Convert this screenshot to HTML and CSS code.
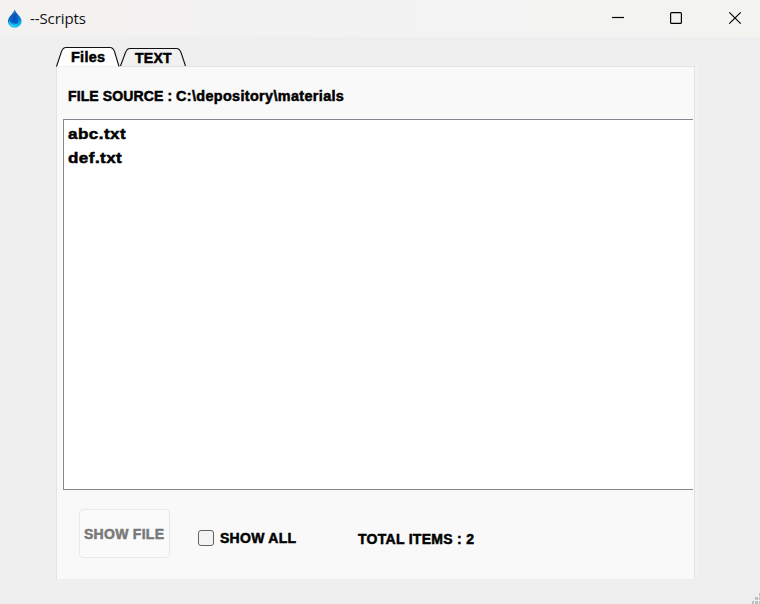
FILE: index.html
```
<!DOCTYPE html>
<html lang="en">
<head>
<meta charset="utf-8">
<title>--Scripts</title>
<link rel="stylesheet" href="styles.css">
</head>
<body>
<div class="window">
  <header class="titlebar">
    <svg class="drop" width="16" height="20" viewBox="0 0 16 20">
      <defs>
        <linearGradient id="water" x1="0.2" y1="0" x2="0.5" y2="1">
          <stop offset="0" stop-color="#5a91b8"/>
          <stop offset=".35" stop-color="#0c59b4"/>
          <stop offset=".6" stop-color="#0874d8"/>
          <stop offset="1" stop-color="#12c8f5"/>
        </linearGradient>
      </defs>
      <path d="M7.700 .3C6.800 4.300 1 8 1 12.200a6.800 6.500 0 0 0 13.600 0C14.600 8 8.600 4.300 7.700 .3z" fill="url(#water)"/>
      <path d="M8 5C8.500 9 12.500 10 11 14 9.500 15.500 6 14.500 4.500 12.500 4.500 10 7.500 8 8 5z" fill="#0546b0" opacity=".65"/>
      <path d="M2.300 11.500c1 4 4 4.800 8 5-5 2.500-9-.5-8-5z" fill="#22e0fa"/>
    </svg>
    <span class="title">--Scripts</span>
    <svg class="controls" width="132" height="16" viewBox="0 0 132 16">
      <path d="M2 7.500h12" class="ctl"/>
      <rect x="60.600" y="2.600" width="10.800" height="10.800" rx="1" class="ctl"/>
      <path d="M119.300 2.300l11.400 11.400M130.700 2.300l-11.400 11.400" class="ctl"/>
    </svg>
  </header>
  <main class="content">
    <nav class="tabs">
      <div class="tab active">
        <svg width="65" height="20" viewBox="0 0 65 20"><path d="M.5 19.500L5.500 4.500Q7 .5 10 .5H54Q57 .5 58.500 4.500L63 19.500"/></svg>
        <span class="t-files">Files</span>
      </div>
      <div class="tab">
        <svg width="66" height="20" viewBox="0 0 66 20"><path d="M-.5 19L4.500 5.500Q6 1.500 9 1.500H55.500Q58.500 1.500 60 5.500L64.500 19"/></svg>
        <span class="t-text">TEXT</span>
      </div>
    </nav>
    <section class="panel">
      <div class="source"><span class="t-source">FILE SOURCE : </span><span class="t-path">C:\depository\materials</span></div>
      <div class="list">
        <div class="item"><span class="t-item">abc.txt</span></div>
        <div class="item"><span class="t-item">def.txt</span></div>
      </div>
      <div class="footer">
        <button class="show-file" disabled><span class="t-show">SHOW FILE</span></button>
        <label class="show-all"><input type="checkbox"><span class="t-all">SHOW ALL</span></label>
        <div class="total"><span class="t-total">TOTAL ITEMS : 2</span></div>
      </div>
    </section>
  </main>
  <svg class="grip" width="8" height="11" viewBox="0 0 8 11">
    <path d="M7 0h1v3H7zM3 4h3v3H3zM7 4h1v3H7zM0 8h2v3H0zM3 8h3v3H3zM7 8h1v3H7z"/>
  </svg>
</div>
</body>
</html>
```
FILE: styles.css
```
* { box-sizing: border-box; }
body { margin: 0; background: #efefef; overflow: hidden; }
.window {
  position: relative;
  width: 760px;
  height: 604px;
  font: bold 14px/16px "Liberation Sans", Arial, sans-serif;
  color: #000;
}
.titlebar {
  display: flex;
  align-items: center;
  height: 37px;
  padding: 0 18px 0 7px;
  background: linear-gradient(90deg, #f4f2f1, #f3f3f3 60%, #f3f3f0);
}
.drop { margin-right: 7px; flex: none; }
.title {
  font: 15px/20px "Open Sans", "Noto Sans", sans-serif;
  letter-spacing: -0.1px;
  color: #111;
  position: relative;
  top: -1px;
}
.controls { margin-left: auto; margin-bottom: 1px; }
.ctl { fill: none; stroke: #000; stroke-width: 1.2; }
.content { padding: 10px 63px 0 56px; }
.tabs { display: flex; height: 20px; margin-bottom: -1px; }
.tab {
  position: relative;
  z-index: 1;
  height: 20px;
}
.tab svg { display: block; overflow: visible; }
.tab path { fill: #f1f1f1; stroke: #111; stroke-width: 1.1; }
.tab.active path { fill: #fff; }
.panel {
  width: 639px;
  height: 513px;
  border: 1px solid #e3e3e3;
  border-bottom: 0;
  background: #f9f9f9;
  box-shadow: 3px 0 #f2f2f2;
}
.source { display: flex; height: 52px; padding: 21px 0 0 11px; }
.list {
  height: 371px;
  margin: 0 1px 0 6px;
  padding: 2px 4px;
  border: 1px solid #828790;
  border-right: 0;
  background: #fff;
}
.item { height: 24px; font-size: 15.5px; line-height: 24px; }
.footer { display: flex; padding: 19px 0 0 22px; }
.show-file {
  width: 91px;
  height: 49px;
  padding: 0 0 0 4px;
  border: 1px solid #e8e8e8;
  border-radius: 4px;
  background: #fafafa;
  color: #787878;
  font: inherit;
  text-align: left;
  white-space: nowrap;
}
.show-all { display: flex; align-items: center; height: 16px; margin: 21px 0 0 28px; }
.show-all input {
  appearance: none;
  width: 16px;
  height: 16px;
  margin: 0 6px 0 0;
  border: 1px solid #626262;
  border-radius: 3px;
  background: #f3f3f3;
}
.total { margin: 22px 0 0 62px; }
.panel span, .tab span {
  display: inline-block;
  white-space: nowrap;
  transform-origin: 0 50%;
  letter-spacing: 0.28px;
  -webkit-text-stroke: 0.5px currentColor;
}
.tab .t-files { position: absolute; top: 2px; left: 15px; transform: scaleX(1.03); }
.tab .t-text { position: absolute; top: 3px; left: 14px; }
.panel .t-source { width: 108px; letter-spacing: 0.12px; }
.panel .t-path { letter-spacing: 0.35px; transform: scaleX(1.028); }
.panel .t-item { letter-spacing: 0.4px; transform: scaleX(1.1); }
.panel .t-all { width: 76px; }
.grip { position: absolute; right: 0; bottom: 0; fill: #bfbfbf; }
```
